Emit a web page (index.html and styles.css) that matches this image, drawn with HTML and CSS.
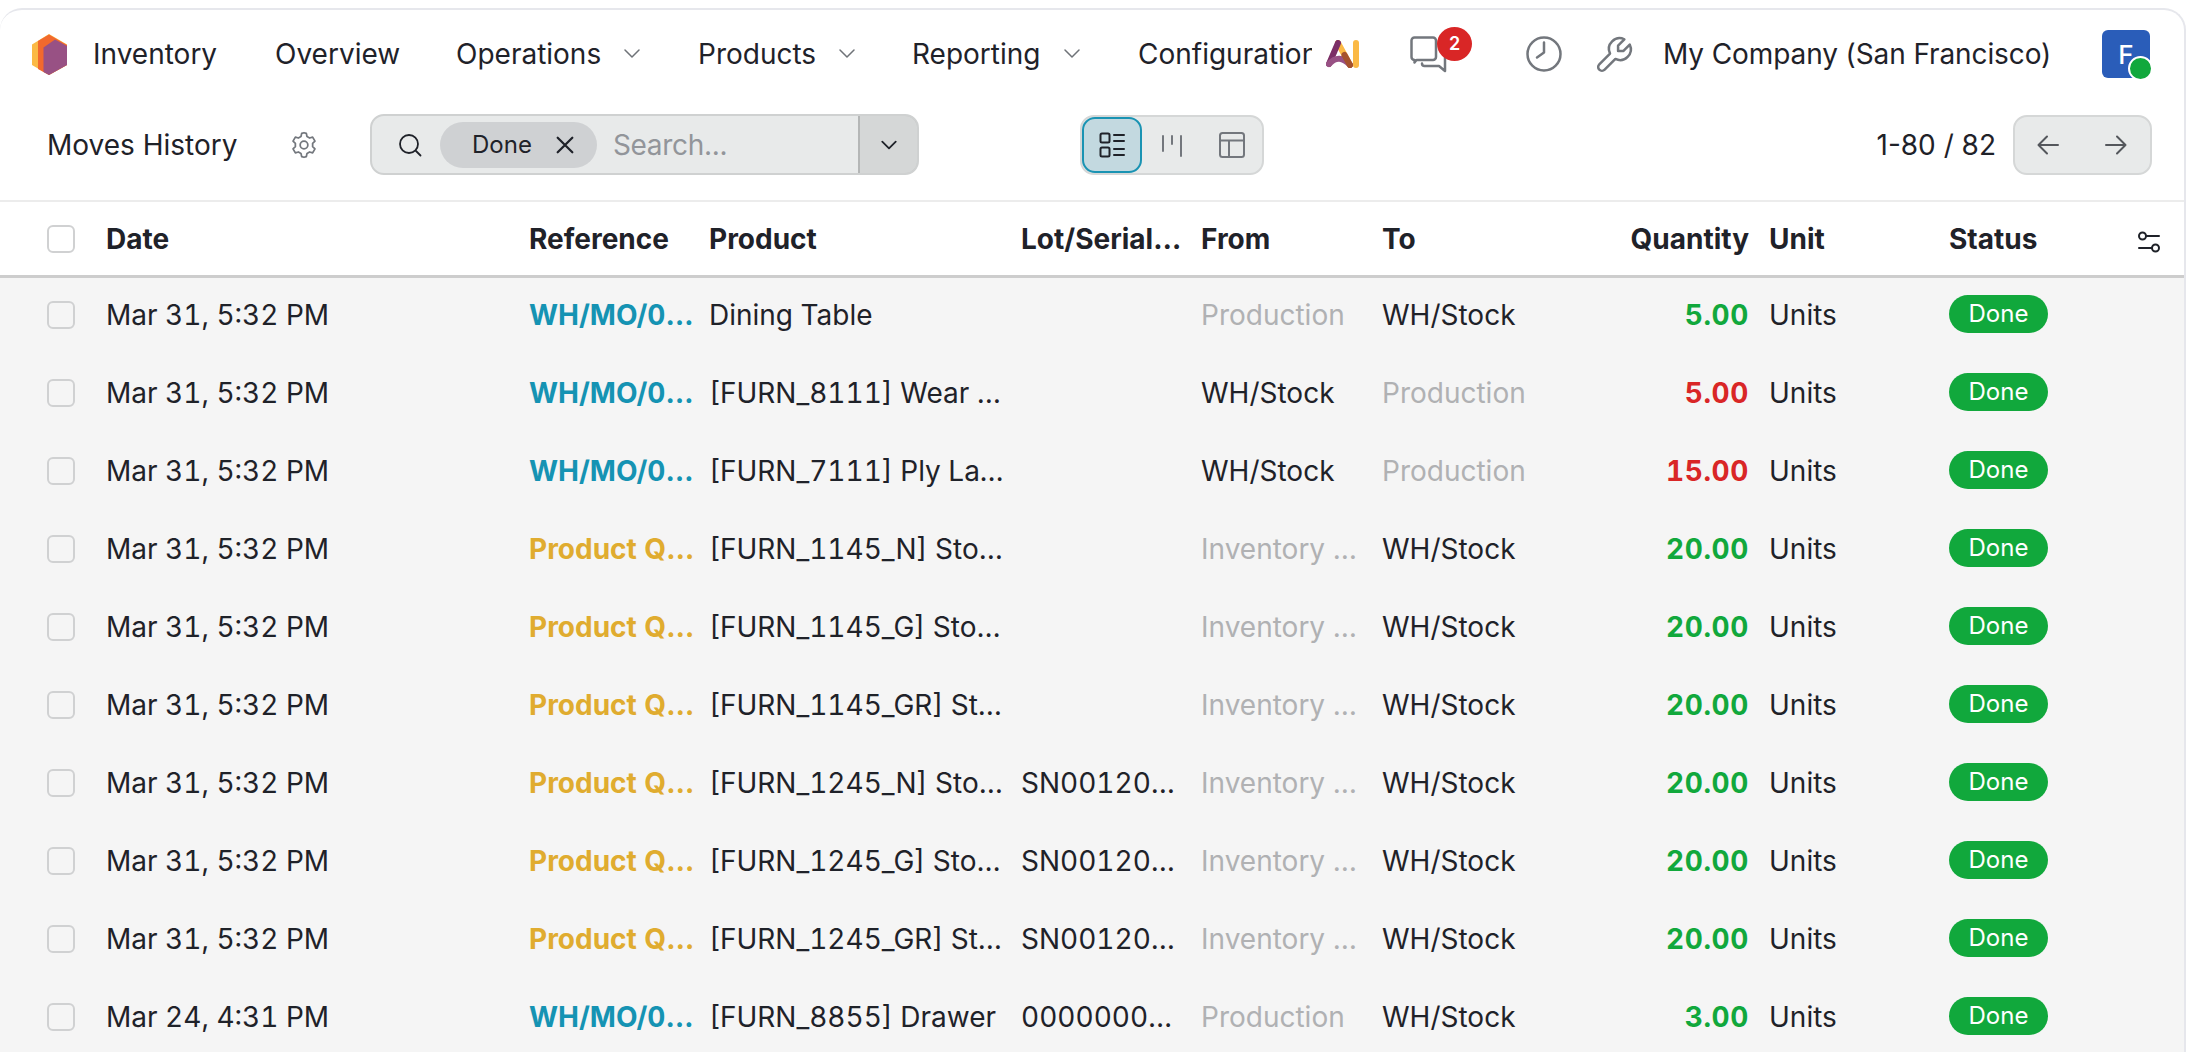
FILE: index.html
```html
<!DOCTYPE html>
<html lang="en">
<head>
<meta charset="utf-8">
<title>Moves History</title>
<link rel="stylesheet" href="styles.css">
</head>
<body>
<div class="frame">
  <nav class="nav">
    <svg class="logo" viewBox="0 0 35 41"><path d="M17 0 35 10.500V31L17 41 0 31V10.500Z" fill="#fbb945"/><path d="M6 7 17 .5 35 11V31L17 41 6 35Z" fill="#f2692d"/><path d="M11.500 13.500 23 5.500 35 12V31L17 41 11.500 38Z" fill="#985184"/></svg>
    <a class="app">Inventory</a>
    <a class="item i-over">Overview</a>
    <a class="item i-ops">Operations<svg class="chev" viewBox="0 0 16 16"><path d="M1 4l7 7 7-7"/></svg></a>
    <a class="item i-prod">Products<svg class="chev" viewBox="0 0 16 16"><path d="M1 4l7 7 7-7"/></svg></a>
    <a class="item i-rep">Reporting<svg class="chev" viewBox="0 0 16 16"><path d="M1 4l7 7 7-7"/></svg></a>
    <a class="item i-conf">Configuration</a>
    <svg class="ai" viewBox="0 0 34 28"><path d="M12 3 24 25" stroke="#fbb945" stroke-width="6"/><path d="M12 3 3 24" stroke="#7c2f66" stroke-width="6"/><path d="M3 24Q13 13 24 25" stroke="#985184" stroke-width="6"/><path d="M18.500 15 24 25" stroke="#a5522d" stroke-width="6"/><path d="M30 3V25" stroke="#fbb945" stroke-width="6"/></svg>
    <div class="chat">
      <svg viewBox="0 0 37 37" class="chat-ico"><path d="M4.500 1.500H23a3 3 0 0 1 3 3V21a3 3 0 0 1-3 3H6.500l-2 2.500V24A3 3 0 0 1 1.500 21V4.500a3 3 0 0 1 3-3Z"/><path d="M12 27.500c0 1.800 1 2.500 2.500 2.500H29l6 5V14"/></svg>
      <span class="count">2</span>
    </div>
    <svg class="clock" viewBox="0 0 36 36"><circle cx="18" cy="18" r="16.500"/><path d="M18 6.500V16.500L11 21.500"/></svg>
    <svg class="wrench" viewBox="0 0 24 24"><path transform="matrix(-1 0 0 1 24 0)" d="M7 10h3v-3l-3.500-3.500a6 6 0 0 1 8 8l6 6a2 2 0 0 1-3 3l-6-6a6 6 0 0 1-8-8l3.500 3.500"/></svg>
    <span class="company">My Company (San Francisco)</span>
    <div class="avatar">F<span class="dot"></span></div>
  </nav>

  <div class="bar">
    <span class="title">Moves History</span>
    <svg class="gear" viewBox="0 0 24 24"><path d="M12 1.500l2 .6.6 2.700 2.200 1.200 2.600-.8 2 3.500-2 1.900v2.800l2 1.900-2 3.500-2.600-.8-2.200 1.200-.6 2.700-2 .6-2-.6-.6-2.700-2.200-1.200-2.600.8-2-3.500 2-1.900v-2.800l-2-1.900 2-3.500 2.600.8 2.200-1.200.6-2.700Z"/><circle cx="12" cy="12" r="3.300"/></svg>
    <div class="search">
      <div class="search-main">
        <svg class="loupe" viewBox="0 0 24 24"><circle cx="11" cy="11" r="9"/><path d="M18 18l4.500 4.500"/></svg>
        <span class="facet">Done<svg class="x" viewBox="0 0 16 16"><path d="M1.500 1.500l13 13M14.500 1.500l-13 13"/></svg></span>
        <span class="placeholder">Search...</span>
      </div>
      <button class="drop"><svg viewBox="0 0 16 16"><path d="M2 5l6 6 6-6"/></svg></button>
    </div>
    <div class="views">
      <button class="view active"><svg viewBox="0 0 26 26"><rect x="1.500" y="1.500" width="9" height="9" rx="1.500"/><rect x="1.500" y="15.500" width="9" height="9" rx="1.500"/><path d="M15 3h10M15 9h10M15 17h10M15 23h10"/></svg></button>
      <button class="view"><svg viewBox="0 0 26 26"><path d="M4 4V19M13 4V12M22 4V24"/></svg></button>
      <button class="view"><svg viewBox="0 0 26 26"><rect x="1" y="1" width="24" height="24" rx="2.500"/><path d="M1 8.500h24M10 8.500v16.500"/></svg></button>
    </div>
    <span class="pager">1-80 / 82</span>
    <div class="arrows">
      <svg viewBox="0 0 22 22"><path d="M21 11H1.500M10 2.500 1.500 11l8.500 8.500"/></svg>
      <svg viewBox="0 0 22 22"><path d="M1 11h19.500M12 2.500l8.500 8.500-8.500 8.500"/></svg>
    </div>
  </div>

  <div class="table">
    <div class="row head">
      <span class="check"></span><span>Date</span><span>Reference</span><span>Product</span><span class="clip lot">Lot/Serial Number</span><span>From</span><span>To</span><span class="num">Quantity</span><span>Unit</span><span>Status</span>
      <svg class="opts" viewBox="0 0 22 22"><circle cx="4.500" cy="5" r="3.500"/><path d="M8 5h13M1 17h13"/><circle cx="17.500" cy="17" r="3.500"/></svg>
    </div>
    <div class="row"><span class="check"></span><span>Mar 31, 5:32 PM</span><span class="ref mo">WH/MO/00012</span><span class="prod">Dining Table</span><span></span><span class="muted clip">Production</span><span>WH/Stock</span><span class="num up">5.00</span><span>Units</span><span><b class="badge">Done</b></span></div>
    <div class="row"><span class="check"></span><span>Mar 31, 5:32 PM</span><span class="ref mo">WH/MO/00012</span><span class="prod">[FURN_8111] Wear&nbsp;Layer</span><span></span><span>WH/Stock</span><span class="muted">Production</span><span class="num down">5.00</span><span>Units</span><span><b class="badge">Done</b></span></div>
    <div class="row"><span class="check"></span><span>Mar 31, 5:32 PM</span><span class="ref mo">WH/MO/00012</span><span class="prod">[FURN_7111] Ply Layer</span><span></span><span>WH/Stock</span><span class="muted">Production</span><span class="num down">15.00</span><span>Units</span><span><b class="badge">Done</b></span></div>
    <div class="row"><span class="check"></span><span>Mar 31, 5:32 PM</span><span class="ref pq">Product Quantity Updated</span><span class="prod">[FURN_1145_N] Stool Black</span><span></span><span class="muted clip">Inventory adjustment</span><span>WH/Stock</span><span class="num up">20.00</span><span>Units</span><span><b class="badge">Done</b></span></div>
    <div class="row"><span class="check"></span><span>Mar 31, 5:32 PM</span><span class="ref pq">Product Quantity Updated</span><span class="prod">[FURN_1145_G] Stool Green</span><span></span><span class="muted clip">Inventory adjustment</span><span>WH/Stock</span><span class="num up">20.00</span><span>Units</span><span><b class="badge">Done</b></span></div>
    <div class="row"><span class="check"></span><span>Mar 31, 5:32 PM</span><span class="ref pq">Product Quantity Updated</span><span class="prod">[FURN_1145_GR] Stool Grey</span><span></span><span class="muted clip">Inventory adjustment</span><span>WH/Stock</span><span class="num up">20.00</span><span>Units</span><span><b class="badge">Done</b></span></div>
    <div class="row"><span class="check"></span><span>Mar 31, 5:32 PM</span><span class="ref pq">Product Quantity Updated</span><span class="prod">[FURN_1245_N] Stool Black</span><span class="clip">SN0012000001</span><span class="muted clip">Inventory adjustment</span><span>WH/Stock</span><span class="num up">20.00</span><span>Units</span><span><b class="badge">Done</b></span></div>
    <div class="row"><span class="check"></span><span>Mar 31, 5:32 PM</span><span class="ref pq">Product Quantity Updated</span><span class="prod">[FURN_1245_G] Stool Green</span><span class="clip">SN0012000002</span><span class="muted clip">Inventory adjustment</span><span>WH/Stock</span><span class="num up">20.00</span><span>Units</span><span><b class="badge">Done</b></span></div>
    <div class="row"><span class="check"></span><span>Mar 31, 5:32 PM</span><span class="ref pq">Product Quantity Updated</span><span class="prod">[FURN_1245_GR] Stool Grey</span><span class="clip">SN0012000003</span><span class="muted clip">Inventory adjustment</span><span>WH/Stock</span><span class="num up">20.00</span><span>Units</span><span><b class="badge">Done</b></span></div>
    <div class="row"><span class="check"></span><span>Mar 24, 4:31 PM</span><span class="ref mo">WH/MO/00009</span><span class="prod">[FURN_8855] Drawer</span><span class="clip">00000000012</span><span class="muted clip">Production</span><span>WH/Stock</span><span class="num up">3.00</span><span>Units</span><span><b class="badge">Done</b></span></div>
  </div>
</div>
</body>
</html>
```
FILE: styles.css
```css
* { box-sizing: border-box; }
html, body { margin: 0; height: 100%; overflow: hidden; background: #fff; }
body { padding-top: 8px; font-family: Inter, "Noto Sans", sans-serif; font-size: 28px; color: #1f2229; }
svg { display: block; fill: none; stroke-linecap: round; stroke-linejoin: round; }
button { padding: 0; font: inherit; }

.frame { width: 2186px; height: 1044px; border: 2px solid #e6e7ec; border-bottom: 0; border-left: 0; border-radius: 22px 22px 0 0; overflow: hidden; }

.nav { display: flex; align-items: center; height: 88px; padding: 0 34px 0 32px; white-space: nowrap; }
.logo { width: 35px; height: 41px; flex: none; }
.app { margin-left: 26px; width: 182px; flex: none; }
.item { display: flex; align-items: center; flex: none; }
.i-over { width: 181px; }
.i-ops { width: 242px; }
.i-prod { width: 214px; }
.i-rep { width: 226px; }
.i-conf { width: 174px; overflow: hidden; display: block; }
.chev { width: 16px; height: 16px; margin-left: 23px; stroke: #6f7378; stroke-width: 1.500; flex: none; }
.ai { width: 34px; height: 28px; flex: none; margin-left: 14px; }
.chat { position: relative; margin-left: 50px; width: 37px; flex: none; }
.chat-ico { width: 37px; height: 37px; stroke: #73777d; stroke-width: 2.500; }
.count { position: absolute; left: 27px; top: -9px; width: 35px; height: 34px; border-radius: 50%; background: #d92626; color: #fff; font-size: 18px; font-weight: 600; display: flex; align-items: center; justify-content: center; }
.clock { width: 36px; height: 36px; margin-left: 79px; flex: none; stroke: #73777d; stroke-width: 2.500; }
.wrench { width: 43px; height: 43px; margin-left: 31px; flex: none; stroke: #73777d; stroke-width: 1.400; }
.company { margin-left: 27px; flex: none; letter-spacing: -.1px; }
.avatar { position: relative; margin-left: auto; width: 48px; height: 48px; flex: none; border-radius: 6px; background: #2a5db9; color: #fff; font-size: 26px; font-weight: 500; display: flex; align-items: center; justify-content: center; }
.dot { position: absolute; right: -3px; bottom: -3px; width: 25px; height: 25px; border-radius: 50%; background: #11a83c; border: 2px solid #fff; }

.bar { display: flex; align-items: center; height: 104px; padding: 0 0 9px 47px; border-bottom: 2px solid #ececec; white-space: nowrap; }
.title { width: 243px; flex: none; }
.gear { width: 28px; height: 28px; stroke: #73777d; stroke-width: 1.500; flex: none; }
.search { display: flex; height: 61px; width: 549px; margin-left: 52px; flex: none; border: 2px solid #cfd1d1; border-radius: 14px; background: #e8eaea; overflow: hidden; }
.search-main { flex: 1; display: flex; align-items: center; padding-left: 26px; }
.loupe { width: 24px; height: 24px; stroke: #1f2229; stroke-width: 1.800; }
.facet { display: flex; align-items: center; height: 46px; margin-left: 18px; padding: 0 23px 0 32px; border-radius: 23px; background: #cfd1d3; font-size: 24px; }
.x { width: 18px; height: 18px; margin-left: 24px; stroke: #1f2229; stroke-width: 2; }
.placeholder { margin-left: 16px; color: #92959a; letter-spacing: -.3px; }
.drop { width: 61px; margin: -2px; border: 2px solid #b4b6b6; border-radius: 0 14px 14px 0; background: #d5d7d7; display: flex; align-items: center; justify-content: center; }
.drop svg { width: 18px; height: 18px; stroke: #1f2229; stroke-width: 1.600; }
.views { display: flex; height: 60px; margin-left: 161px; flex: none; border: 2px solid #d5d7d7; border-radius: 14px; background: #e8eaea; }
.view { width: 60px; border: 0; background: transparent; display: flex; align-items: center; justify-content: center; border-radius: 13px; }
.view svg { width: 26px; height: 26px; stroke: #73777d; stroke-width: 2; }
.view.active { background: #c3d9e0; border: 2px solid #1a93b3; }
.view.active svg { stroke: #1f2229; }
.pager { margin-left: auto; }
.arrows { display: flex; align-items: center; justify-content: space-between; width: 139px; height: 60px; margin: 0 32px 0 17px; padding: 0 23px 0 22px; flex: none; border: 2px solid #d5d7d7; border-radius: 14px; background: #e8eaea; }
.arrows svg { width: 22px; height: 22px; stroke: #54575c; stroke-width: 2; }

.table { background: #f5f5f5; }
.row { position: relative; display: grid; grid-template-columns: 39px 403px 160px 292px 160px 161px 171px 176px 160px 1fr; column-gap: 20px; align-items: center; height: 78px; padding: 0 0 4px 47px; white-space: nowrap; font-variant-numeric: tabular-nums; }
.row > span { min-width: 0; }
.head { background: #fff; height: 76px; border-bottom: 3px solid #cdcdcd; padding-bottom: 0; font-weight: 700; }
.check { width: 28px; height: 28px; border: 2px solid #d0d1d2; border-radius: 6px; }
.clip, .ref, .prod { overflow: hidden; text-overflow: ellipsis; }
.prod { margin-right: -5px; }
.lot { margin-right: -3px; }
.ref { font-weight: 700; margin-right: -12px; }
.mo { color: #1593b3; }
.pq { color: #e0ac2f; }
.muted { color: #b0b1b3; }
.num { text-align: right; font-weight: 700; }
.up, .down { letter-spacing: .6px; }
.up { color: #11a83c; }
.down { color: #d92626; }
.badge { display: inline-flex; align-items: center; justify-content: center; width: 99px; height: 38px; margin-top: -3px; vertical-align: top; border-radius: 19px; background: #11a83c; color: #fff; font-size: 24px; font-weight: 400; }
.opts { position: absolute; right: 24px; top: 29px; width: 22px; height: 22px; stroke: #1f2229; stroke-width: 2; }
```
